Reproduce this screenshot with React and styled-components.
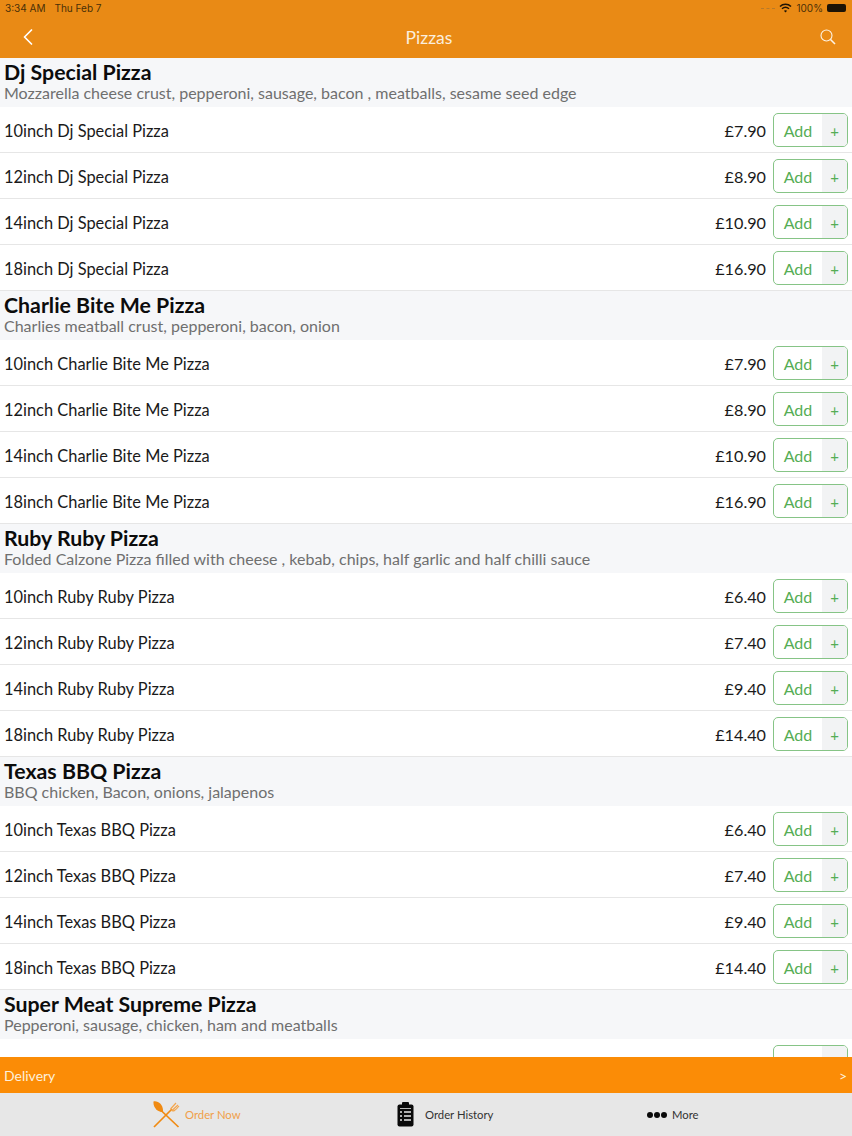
import React from "react";
import styled, { createGlobalStyle } from "styled-components";
import { FiChevronLeft } from "react-icons/fi";

const menu = [
  {
    name: "Dj Special Pizza",
    info: "Mozzarella cheese crust, pepperoni, sausage, bacon , meatballs, sesame seed edge",
    prices: ["£7.90", "£8.90", "£10.90", "£16.90"],
  },
  {
    name: "Charlie Bite Me Pizza",
    info: "Charlies meatball crust, pepperoni, bacon, onion",
    prices: ["£7.90", "£8.90", "£10.90", "£16.90"],
  },
  {
    name: "Ruby Ruby Pizza",
    info: "Folded Calzone Pizza filled with cheese , kebab, chips, half garlic and half chilli sauce",
    prices: ["£6.40", "£7.40", "£9.40", "£14.40"],
  },
  {
    name: "Texas BBQ Pizza",
    info: "BBQ chicken, Bacon, onions, jalapenos",
    prices: ["£6.40", "£7.40", "£9.40", "£14.40"],
  },
  {
    name: "Super Meat Supreme Pizza",
    info: "Pepperoni, sausage, chicken, ham and meatballs",
    prices: [],
  },
];

const sizes = ["10inch", "12inch", "14inch", "18inch"];

const Global = createGlobalStyle`
  html, body {
    margin: 0;
    padding: 0;
    background: #ffffff;
  }
  body {
    font-family: "Lato", "Noto Sans", sans-serif;
  }
`;

const Screen = styled.div`
  display: flex;
  flex-direction: column;
  width: 852px;
  height: 1136px;
  overflow: hidden;
`;

const Header = styled.header`
  flex: none;
  height: 58px;
  background: #e98a15;
  display: flex;
  flex-direction: column;
`;

const StatusBar = styled.div`
  height: 16px;
  padding: 0 6px 0 5px;
  display: flex;
  align-items: center;
  justify-content: space-between;
  font-size: 10px;
  color: #4a3008;
  font-family: "Inter", sans-serif;
`;

const StatusGroup = styled.div`
  display: flex;
  align-items: center;
  gap: ${(p) => p.$gap || 4}px;
`;

const SignalDashes = styled.span`
  width: 14px;
  border-top: 1px dashed #b77a2a;
`;

const Battery = styled.span`
  display: inline-block;
  width: 19px;
  height: 8px;
  border-radius: 2px;
  background: #1c1305;
`;

const NavBar = styled.div`
  flex: 1;
  display: flex;
  align-items: center;
  justify-content: space-between;
  padding: 0 16px 0 18px;
  color: #ffffff;
`;

const NavTitle = styled.div`
  font-size: 17.5px;
  margin-right: 4px;
  color: #fbeedd;
`;

const List = styled.main`
  flex: 1;
  min-height: 0;
  overflow: hidden;
`;

const SectionHead = styled.div`
  height: 49px;
  padding: 2px 4px 0;
  box-sizing: border-box;
  background: #f6f7f9;
`;

const SectionName = styled.div`
  font-size: 21.3px;
  line-height: 24px;
  font-weight: 700;
  color: #0c0c0c;
`;

const SectionInfo = styled.div`
  font-size: 16px;
  line-height: 18px;
  color: #6f6f6f;
`;

const Row = styled.div`
  height: 46px;
  box-sizing: border-box;
  padding: 1px 4px 0;
  display: flex;
  align-items: center;
  background: #ffffff;
  border-bottom: 1px solid #e6e6e6;
`;

const RowName = styled.div`
  flex: 1;
  font-size: 16.4px;
  color: #1a1a1a;
`;

const Price = styled.div`
  font-size: 16.2px;
  color: #1a1a1a;
  margin-right: 7px;
`;

const AddButton = styled.div`
  width: 75px;
  height: 34px;
  box-sizing: border-box;
  border: 1px solid #86c486;
  border-radius: 5px;
  display: flex;
  overflow: hidden;
  color: #55ad55;
`;

const AddLabel = styled.div`
  flex: 1;
  text-align: center;
  font-size: 16px;
  line-height: 34px;
`;

const AddPlus = styled.div`
  width: 25px;
  background: #f2f3f4;
  text-align: center;
  font-size: 15px;
  line-height: 34px;
`;

const DeliveryBar = styled.div`
  flex: none;
  height: 36px;
  background: #fb8c06;
  color: #fdf0dc;
  display: flex;
  align-items: center;
  justify-content: space-between;
  padding: 0 5px 0 4px;
  font-size: 14px;
`;

const TabBar = styled.nav`
  flex: none;
  height: 43px;
  padding-left: 153px;
  background: #e7e7e7;
  display: grid;
  grid-template-columns: 244px 250px 1fr;
`;

const Tab = styled.div`
  display: flex;
  align-items: center;
  gap: ${(p) => p.$gap}px;
  font-size: 11.3px;
  color: ${(p) => (p.$active ? "#f0a04a" : "#333333")};
`;

const Dots = styled.span`
  display: flex;
  gap: 1px;
`;

const Dot = styled.i`
  width: 6px;
  height: 6px;
  border-radius: 50%;
  background: #0a0a0a;
`;

function CutleryIcon() {
  return (
    <svg width="27" height="27" viewBox="0 0 27 27" fill="none">
      <path d="M5.5 7 L25.5 26" stroke="#f08a12" strokeWidth="1.7" />
      <path d="M1 26 L19 8" stroke="#f08a12" strokeWidth="1.7" />
      <path d="M0.5 0.5 C5 -0.5 10.5 3.5 10 11 C4 11 0 6 0.5 0.5 Z" fill="#f08a12" />
      <path d="M17.5 8 L23 2 M19 9.5 L25 4 M18 9 C20 11 22 10 26 5" stroke="#f3a64e" strokeWidth="1.2" />
    </svg>
  );
}

function ClipboardIcon() {
  return (
    <svg width="17" height="25" viewBox="0 0 17 25">
      <rect x="0.5" y="2.5" width="16" height="22" rx="2" fill="#0a0a0a" />
      <rect x="5" y="0" width="7" height="5" rx="1" fill="#0a0a0a" />
      <path d="M3 6.5h11" stroke="#e7e7e7" strokeWidth="0.8" />
      <path d="M3 10h2M3 14h2M3 18h2M7 10h7M7 14h7M7 18h7" stroke="#e7e7e7" strokeWidth="1.4" />
    </svg>
  );
}

function WifiIcon() {
  return (
    <svg width="13" height="10" viewBox="0 0 13 10" fill="none" stroke="#1c1305" strokeWidth="1.5">
      <path d="M1 3.5 C4 0.5 9 0.5 12 3.5" />
      <path d="M3 5.7 C5 4 8 4 10 5.7" />
      <path d="M6.5 9.5 L4.9 7.8 C5.8 7 7.2 7 8.1 7.8 Z" fill="#1c1305" stroke="none" />
    </svg>
  );
}

function SearchIcon() {
  return (
    <svg width="16" height="16" viewBox="0 0 16 16" fill="none" stroke="#fdf3e4">
      <circle cx="6.5" cy="6.5" r="5.5" strokeWidth="1.1" />
      <path d="M10.5 10.5 L15 15" strokeWidth="1.6" />
    </svg>
  );
}

function App() {
  return (
    <Screen>
      <Global />
      <Header>
        <StatusBar>
          <StatusGroup $gap={9}>
            <span>3:34 AM</span>
            <span>Thu Feb 7</span>
          </StatusGroup>
          <StatusGroup>
            <SignalDashes />
            <WifiIcon />
            <span>100%</span>
            <Battery />
          </StatusGroup>
        </StatusBar>
        <NavBar>
          <FiChevronLeft size={28} strokeWidth={1.5} style={{ marginLeft: -4 }} />
          <NavTitle>Pizzas</NavTitle>
          <SearchIcon />
        </NavBar>
      </Header>
      <List>
        {menu.map((pizza) => (
          <section key={pizza.name}>
            <SectionHead>
              <SectionName>{pizza.name}</SectionName>
              <SectionInfo>{pizza.info}</SectionInfo>
            </SectionHead>
            {pizza.prices.map((price, i) => (
              <Row key={sizes[i]}>
                <RowName>
                  {sizes[i]} {pizza.name}
                </RowName>
                <Price>{price}</Price>
                <AddButton>
                  <AddLabel>Add</AddLabel>
                  <AddPlus>+</AddPlus>
                </AddButton>
              </Row>
            ))}
          </section>
        ))}
        <Row>
          <RowName />
          <AddButton>
            <AddLabel />
            <AddPlus />
          </AddButton>
        </Row>
      </List>
      <DeliveryBar>
        <span>Delivery</span>
        <span>&gt;</span>
      </DeliveryBar>
      <TabBar>
        <Tab $active $gap={5}>
          <CutleryIcon />
          Order Now
        </Tab>
        <Tab $gap={11}>
          <ClipboardIcon />
          Order History
        </Tab>
        <Tab $gap={5}>
          <Dots>
            <Dot />
            <Dot />
            <Dot />
          </Dots>
          More
        </Tab>
      </TabBar>
    </Screen>
  );
}

export default App;
